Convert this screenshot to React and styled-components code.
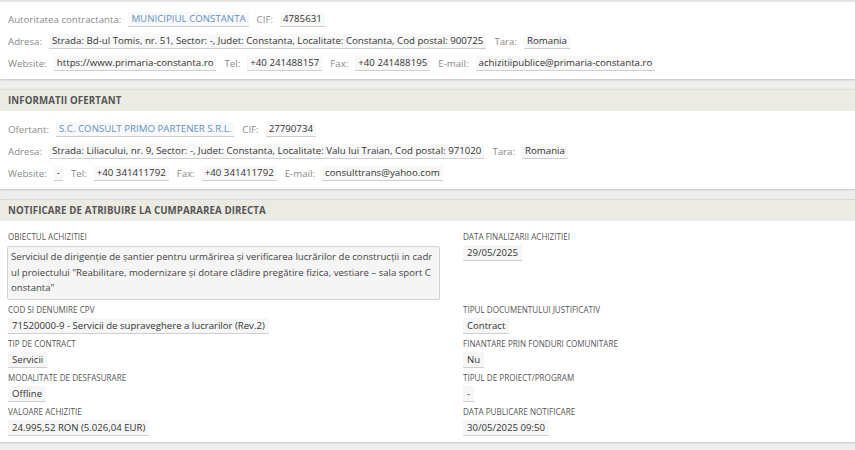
import React from "react";
import styled, { createGlobalStyle } from "styled-components";

const Global = createGlobalStyle`
  html, body { margin: 0; padding: 0; background: #eeeeee; }
  body { font-family: "Open Sans", "DejaVu Sans", sans-serif; }
  * { box-sizing: border-box; }
`;

const Page = styled.div`
  width: 855px;
  height: 450px;
  overflow: hidden;
  background: #eeeeee;
  display: flex;
  flex-direction: column;
  gap: 10px;
`;

const Panel = styled.section`
  background: #ffffff;
  border-top: ${(p) => (p.$top ? "2px solid #e6e6e6" : "none")};
  box-shadow: 0 1px 2px rgba(0, 0, 0, 0.18);
`;

const Header = styled.div`
  height: 22px;
  display: flex;
  align-items: center;
  padding: 0 8px;
  background: #ebeae3;
  border-top: 1px solid #dcdcd6;
  font-size: 9.7px;
  font-weight: 700;
  letter-spacing: 0.1px;
  color: #555555;
`;

const InfoBody = styled.div`
  padding: ${(p) => (p.$top ? "6px" : "7px")} 8px 5px;
  display: flex;
  flex-direction: column;
`;

const Row = styled.div`
  height: 22px;
  display: flex;
  align-items: center;
  gap: 7px;
  white-space: nowrap;
`;

const Label = styled.span`
  font-size: 9.7px;
  color: #8a8a8a;
`;

const Value = styled.span`
  font-size: 9.7px;
  line-height: 14px;
  padding: 0 3px;
  margin-right: 1px;
  color: ${(p) => (p.$link ? "#5f93c2" : "#333333")};
  background: #f8f8f8;
  border-bottom: 1px solid #cfcfcf;
`;

const FieldGrid = styled.div`
  display: grid;
  grid-template-columns: 455px 1fr;
  row-gap: 4px;
  padding: 10px 8px 6px 8px;
`;

const Field = styled.div`
  display: flex;
  flex-direction: column;
  align-items: flex-start;
  gap: 2px;
  padding-right: ${(p) => (p.$left ? "15px" : "0")};
`;

const FieldLabel = styled.div`
  font-size: 8.1px;
  line-height: 12px;
  color: #555555;
  text-transform: uppercase;
`;

const FieldValue = styled.div`
  font-size: 9.6px;
  line-height: 15px;
  padding: 0 4px;
  color: #333333;
  background: #f6f6f6;
  border-bottom: 1px solid #cfcfcf;
`;

const TextBox = styled.div`
  width: 433px;
  margin-left: -1px;
  margin-top: 1px;
  padding: 2px 3px 3px 3px;
  font-size: 9.6px;
  line-height: 15.5px;
  color: #444444;
  background: #f5f5f5;
  border: 1px solid #d2d2d2;
  border-radius: 2px;
  word-break: break-all;
`;

const Pair = ({ label, value, link }) => (
  <>
    <Label>{label}</Label>
    <Value $link={link}>{value}</Value>
  </>
);

export default function App() {
  return (
    <>
      <Global />
      <Page>
        <Panel $top>
          <InfoBody $top>
            <Row>
              <Pair label="Autoritatea contractanta:" value="MUNICIPIUL CONSTANTA" link />
              <Pair label="CIF:" value="4785631" />
            </Row>
            <Row>
              <Pair
                label="Adresa:"
                value="Strada: Bd-ul Tomis, nr. 51, Sector: -, Judet: Constanta, Localitate: Constanta, Cod postal: 900725"
              />
              <Pair label="Tara:" value="Romania" />
            </Row>
            <Row>
              <Pair label="Website:" value="https://www.primaria-constanta.ro" />
              <Pair label="Tel:" value="+40 241488157" />
              <Pair label="Fax:" value="+40 241488195" />
              <Pair label="E-mail:" value="achizitiipublice@primaria-constanta.ro" />
            </Row>
          </InfoBody>
        </Panel>

        <Panel>
          <Header>INFORMATII OFERTANT</Header>
          <InfoBody>
            <Row>
              <Pair label="Ofertant:" value="S.C. CONSULT PRIMO PARTENER S.R.L." link />
              <Pair label="CIF:" value="27790734" />
            </Row>
            <Row>
              <Pair
                label="Adresa:"
                value="Strada: Liliacului, nr. 9, Sector: -, Judet: Constanta, Localitate: Valu lui Traian, Cod postal: 971020"
              />
              <Pair label="Tara:" value="Romania" />
            </Row>
            <Row>
              <Pair label="Website:" value="-" />
              <Pair label="Tel:" value="+40 341411792" />
              <Pair label="Fax:" value="+40 341411792" />
              <Pair label="E-mail:" value="consulttrans@yahoo.com" />
            </Row>
          </InfoBody>
        </Panel>

        <Panel>
          <Header>NOTIFICARE DE ATRIBUIRE LA CUMPARAREA DIRECTA</Header>
          <FieldGrid>
            <Field $left>
              <FieldLabel>Obiectul achizitiei</FieldLabel>
              <TextBox>
                Serviciul de dirigenție de șantier pentru urmărirea și verificarea lucrărilor de construcții in cadrul proiectului "Reabilitare, modernizare și dotare clădire pregătire fizica, vestiare – sala sport Constanta"
              </TextBox>
            </Field>
            <Field>
              <FieldLabel>Data finalizarii achizitiei</FieldLabel>
              <FieldValue>29/05/2025</FieldValue>
            </Field>
            <Field $left>
              <FieldLabel>Cod si denumire CPV</FieldLabel>
              <FieldValue>71520000-9 - Servicii de supraveghere a lucrarilor (Rev.2)</FieldValue>
            </Field>
            <Field>
              <FieldLabel>Tipul documentului justificativ</FieldLabel>
              <FieldValue>Contract</FieldValue>
            </Field>
            <Field $left>
              <FieldLabel>Tip de contract</FieldLabel>
              <FieldValue>Servicii</FieldValue>
            </Field>
            <Field>
              <FieldLabel>Finantare prin fonduri comunitare</FieldLabel>
              <FieldValue>Nu</FieldValue>
            </Field>
            <Field $left>
              <FieldLabel>Modalitate de desfasurare</FieldLabel>
              <FieldValue>Offline</FieldValue>
            </Field>
            <Field>
              <FieldLabel>Tipul de proiect/program</FieldLabel>
              <FieldValue>-</FieldValue>
            </Field>
            <Field $left>
              <FieldLabel>Valoare achizitie</FieldLabel>
              <FieldValue>24.995,52 RON (5.026,04 EUR)</FieldValue>
            </Field>
            <Field>
              <FieldLabel>Data publicare notificare</FieldLabel>
              <FieldValue>30/05/2025 09:50</FieldValue>
            </Field>
          </FieldGrid>
        </Panel>
      </Page>
    </>
  );
}
